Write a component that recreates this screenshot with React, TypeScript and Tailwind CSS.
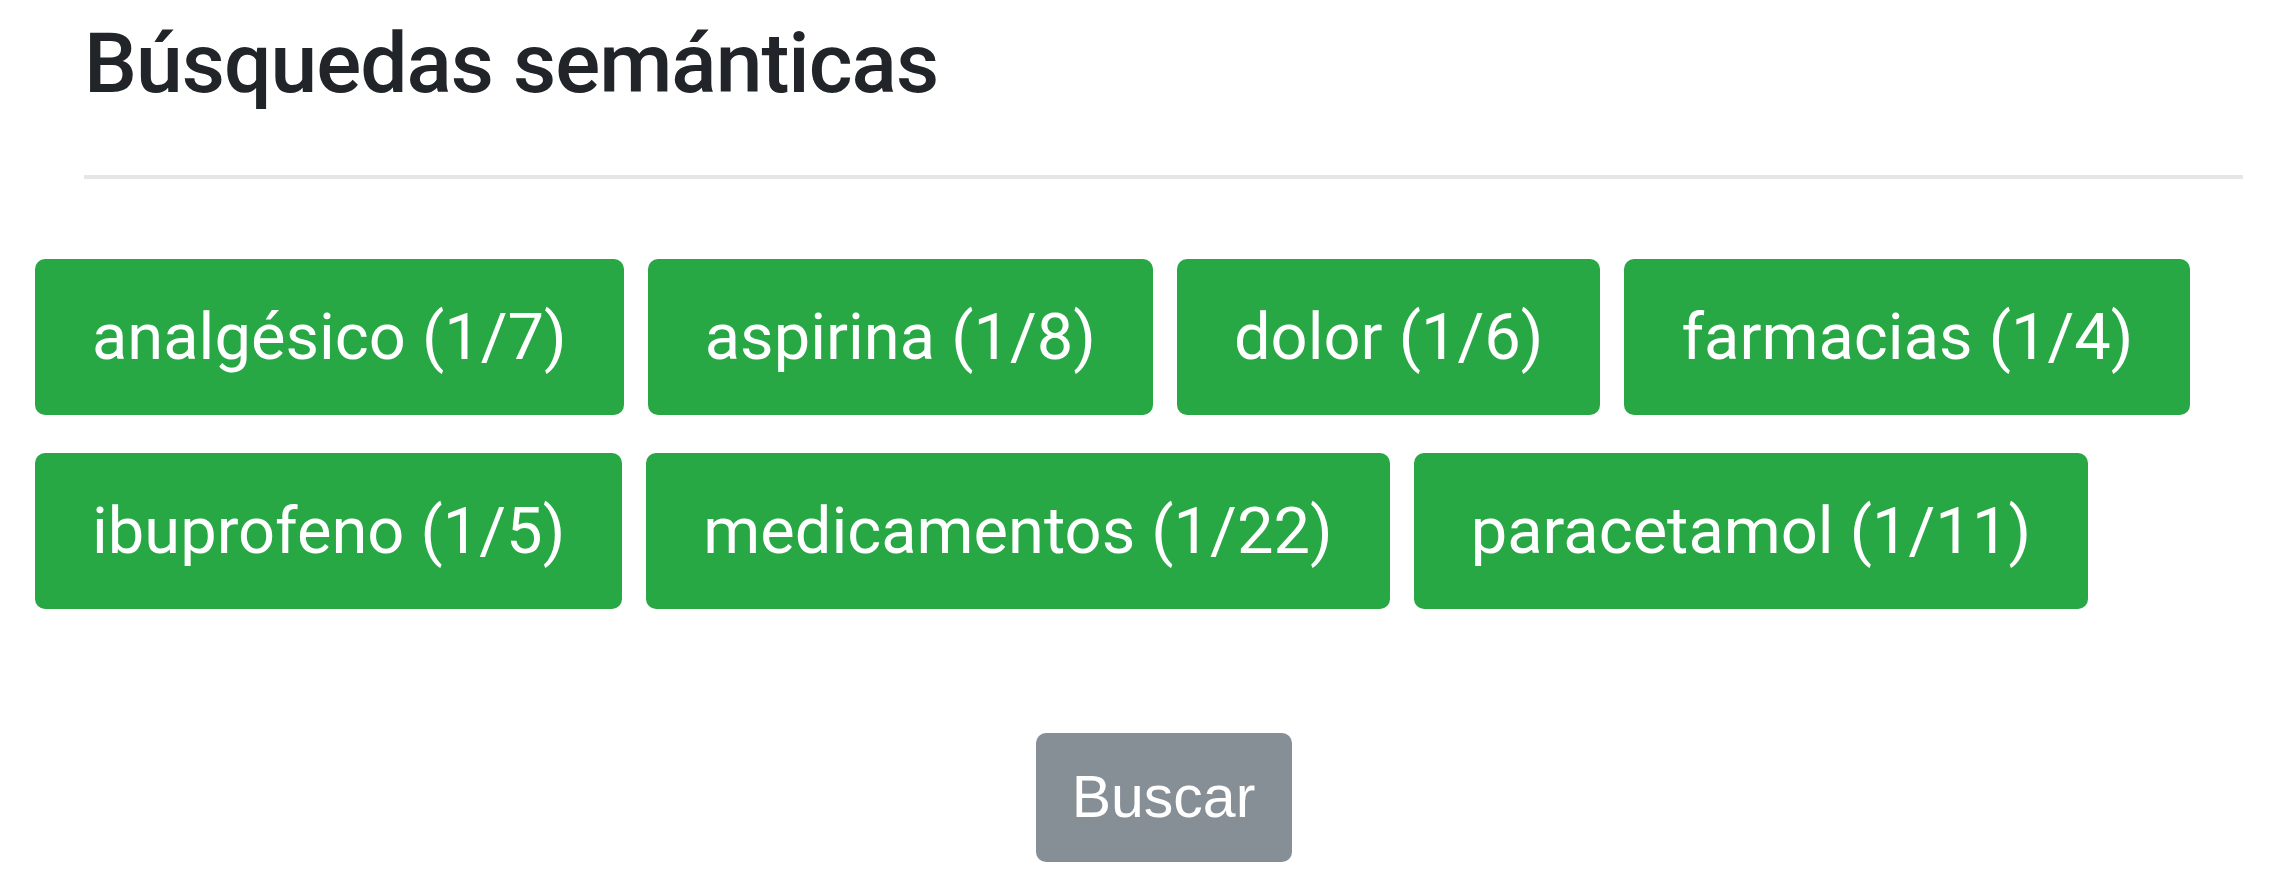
const terms = [
  { label: "analgésico", count: "1/7" },
  { label: "aspirina", count: "1/8" },
  { label: "dolor", count: "1/6" },
  { label: "farmacias", count: "1/4" },
  { label: "ibuprofeno", count: "1/5" },
  { label: "medicamentos", count: "1/22" },
  { label: "paracetamol", count: "1/11" },
];

export default function App() {
  return (
    <div className="w-[2278px] h-[891px] overflow-hidden bg-white font-['Roboto',sans-serif]">
      <div className="pl-[84px] pr-[35px]">
        <h3 className="pt-[14px] text-[84px] leading-[1.2] font-medium tracking-[-1px] text-[#212529]">
          Búsquedas semánticas
        </h3>
        <hr className="mt-[60px] border-0 border-t-[4px] border-[#e6e6e6]" />

        <div className="-mx-[49px] mt-[80px] flex flex-wrap gap-x-[24px] gap-y-[38px]">
          {terms.map((t) => (
            <button
              key={t.label}
              className="rounded-[10px] bg-[#28a745] px-[57px] py-[29px] text-[65px] leading-[98px] text-white"
            >
              {t.label} ({t.count})
            </button>
          ))}
        </div>

        <div className="mt-[124px] flex justify-center">
          <button
            disabled
            className="flex h-[129px] w-[256px] items-center justify-center rounded-[10px] bg-[#868e96] font-['Liberation_Sans',Arial,sans-serif] text-[59px] text-white"
          >
            Buscar
          </button>
        </div>
      </div>
    </div>
  );
}
